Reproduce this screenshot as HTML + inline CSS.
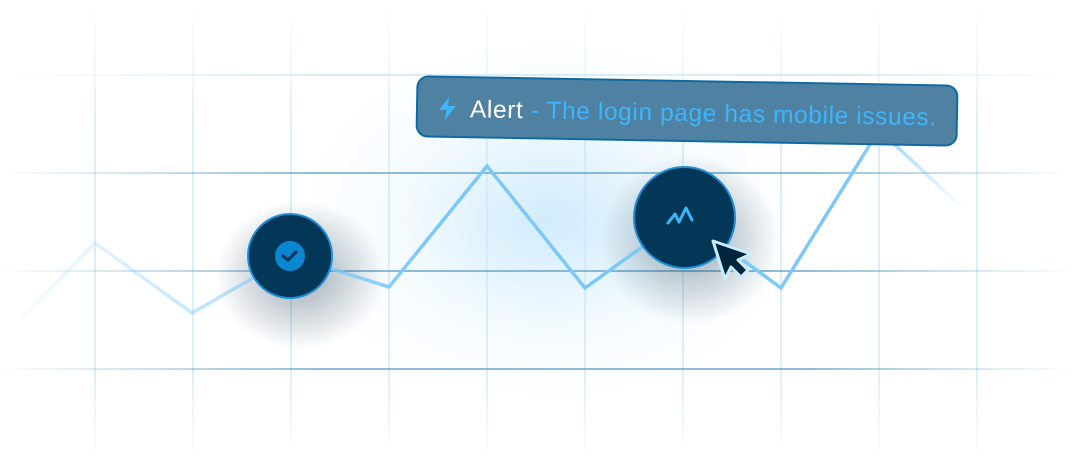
<!DOCTYPE html>
<html><head><style>
body{margin:0;width:1072px;height:460px;background:#fff;overflow:hidden;position:relative;font-family:"Liberation Sans",sans-serif}
.glow{position:absolute;left:300px;top:40px;width:500px;height:360px;border-radius:50%;background:radial-gradient(closest-side,rgba(120,200,245,.35),rgba(180,225,250,.15) 60%,rgba(255,255,255,0))}
svg.g{position:absolute;left:0;top:0}
.alert{position:absolute;left:416px;top:80px;width:542px;height:62px;background:#4f82a2;border:2px solid #0f6aa3;border-radius:12px;transform:rotate(1deg);box-sizing:border-box;font-size:24.5px;line-height:64px;padding-left:52px;color:#3db5fb;white-space:nowrap;letter-spacing:.6px}
.alert b{font-weight:normal;color:#fff}
.c{position:absolute;border-radius:50%;background:#023758;border:2px solid #1d8fd8;box-sizing:border-box}
</style></head><body>
<div class="glow"></div>
<svg class="g" width="1072" height="460">
<defs>
<linearGradient id="fv" gradientUnits="userSpaceOnUse" x1="0" y1="0" x2="0" y2="460"><stop offset="0" stop-color="#d6ecfa" stop-opacity="0"/><stop offset=".3" stop-color="#cfe8f8"/><stop offset=".8" stop-color="#cfe8f8"/><stop offset="1" stop-color="#cfe8f8" stop-opacity="0"/></linearGradient>
<linearGradient id="fh" gradientUnits="userSpaceOnUse" x1="0" y1="0" x2="1072" y2="0"><stop offset="0" stop-color="#6aa6cc" stop-opacity="0"/><stop offset=".3" stop-color="#6aa6cc"/><stop offset=".75" stop-color="#6aa6cc"/><stop offset="1" stop-color="#6aa6cc" stop-opacity="0"/></linearGradient>
<linearGradient id="fh2" gradientUnits="userSpaceOnUse" x1="0" y1="0" x2="1072" y2="0"><stop offset="0" stop-color="#cfe6f5" stop-opacity="0"/><stop offset=".3" stop-color="#cfe6f5"/><stop offset=".8" stop-color="#cfe6f5"/><stop offset="1" stop-color="#cfe6f5" stop-opacity="0"/></linearGradient>
<linearGradient id="ln" gradientUnits="userSpaceOnUse" x1="0" y1="0" x2="1072" y2="0"><stop offset="0" stop-color="#7cc8fa" stop-opacity="0"/><stop offset=".2" stop-color="#7cc8fa" stop-opacity=".5"/><stop offset=".4" stop-color="#7cc8fa"/><stop offset=".8" stop-color="#7cc8fa"/><stop offset=".9" stop-color="#7cc8fa" stop-opacity="0"/></linearGradient>
<radialGradient id="sh"><stop offset="0" stop-color="#0a2a40" stop-opacity=".4"/><stop offset="1" stop-color="#0a2a40" stop-opacity="0"/></radialGradient>
</defs>
<g stroke="url(#fv)" stroke-width="1.5">
<line x1="95" y1="0" x2="95" y2="460"/><line x1="193" y1="0" x2="193" y2="460"/><line x1="291" y1="0" x2="291" y2="460"/><line x1="389" y1="0" x2="389" y2="460"/><line x1="487" y1="0" x2="487" y2="460"/><line x1="585" y1="0" x2="585" y2="460"/><line x1="683" y1="0" x2="683" y2="460"/><line x1="781" y1="0" x2="781" y2="460"/><line x1="879" y1="0" x2="879" y2="460"/><line x1="977" y1="0" x2="977" y2="460"/>
</g>
<line x1="0" y1="75" x2="1072" y2="75" stroke="url(#fh2)" stroke-width="1.5"/>
<g stroke="url(#fh)" stroke-width="1.5">
<line x1="0" y1="173" x2="1072" y2="173"/><line x1="0" y1="271" x2="1072" y2="271"/><line x1="0" y1="369" x2="1072" y2="369"/>
</g>
<ellipse cx="300" cy="275" rx="85" ry="75" fill="url(#sh)"/>
<ellipse cx="690" cy="240" rx="90" ry="85" fill="url(#sh)"/>
<polyline points="20,320 95,243 192,313 291,256 389,287 487,166 585,288 684,217 781,288 879,130 965,210" fill="none" stroke="url(#ln)" stroke-width="3.5" stroke-linejoin="miter"/>
</svg>
<div class="alert"><b>Alert</b> - The login page has mobile issues.</div>
<svg style="position:absolute;left:436px;top:96px" width="24" height="26" viewBox="0 0 24 26"><path d="M13 1 L3 14 H11 L8 25 L20 10 H12 Z" fill="#3db5fb"/></svg>
<div class="c" style="left:247px;top:213px;width:86px;height:86px"></div>
<svg style="position:absolute;left:272px;top:238px" width="36" height="36"><circle cx="18" cy="18" r="15" fill="#0b86d0"/><path d="M11 18 L16 22 L24 14" fill="none" stroke="#023758" stroke-width="3.2" stroke-linecap="round" stroke-linejoin="round"/></svg>
<div class="c" style="left:633px;top:166px;width:103px;height:103px"></div>
<svg style="position:absolute;left:665px;top:205px" width="34" height="26"><path d="M3 18 L10 9 L14 17 L21 3 L27 15" fill="none" stroke="#3db5fb" stroke-width="3" stroke-linecap="round" stroke-linejoin="round"/></svg>
<svg style="position:absolute;left:708px;top:236px" width="50" height="50"><path d="M5 5 L17 43 L23 31 L33 41 L40 34 L30 24 L43 18 Z" fill="#02243d" stroke="#c9ecff" stroke-width="3" stroke-linejoin="round"/></svg>
</body></html>
